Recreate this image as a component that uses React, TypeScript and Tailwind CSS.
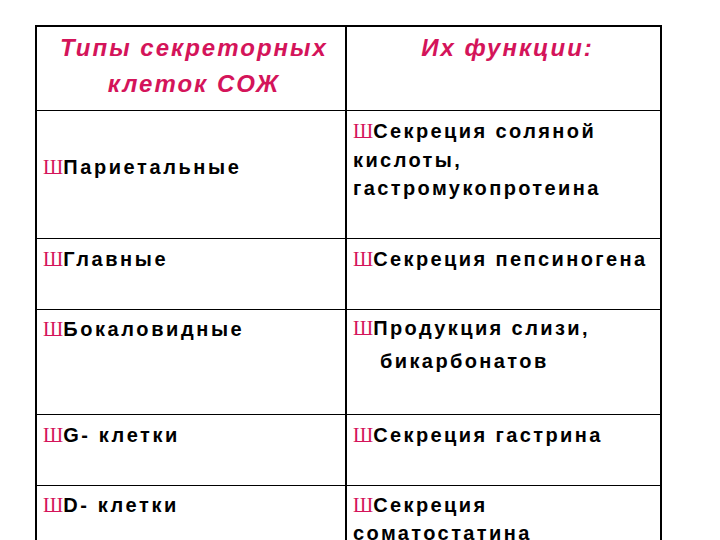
const rows = [
  { left: "Париетальные", right: ["Секреция соляной", "кислоты,", "гастромукопротеина"], h: "h-[128px]", lpt: "pt-[41px]", rlh: "leading-[28.5px]", rpt: "pt-[6px]" },
  { left: "Главные", right: ["Секреция пепсиногена"], h: "h-[71px]", lpt: "pt-[5px]", rlh: "leading-[30px]", rpt: "pt-[5px]" },
  { left: "Бокаловидные", right: ["Продукция слизи,", "бикарбонатов"], h: "h-[105px]", lpt: "pt-[4px]", rlh: "leading-[33px]", rpt: "pt-[2px]", indent: true },
  { left: "G- клетки", right: ["Секреция гастрина"], h: "h-[71px]", lpt: "pt-[5px]", rlh: "leading-[30px]", rpt: "pt-[5px]" },
  { left: "D- клетки", right: ["Секреция", "соматостатина"], h: "h-[80px]", lpt: "pt-[4px]", rlh: "leading-[28px]", rpt: "pt-[5px]" },
];

function Bullet() {
  return (
    <span className="font-['Liberation_Serif',serif] text-[20px] font-normal tracking-normal text-[#d4145a]">
      Ш
    </span>
  );
}

export default function App() {
  return (
    <div className="h-[540px] w-[720px] overflow-hidden bg-white pl-[35px] pt-[25px] font-['Liberation_Sans',Arial,sans-serif]">
      <div className="w-[627px] border-2 border-b-0 border-black">
        {/* Header */}
        <div className="grid h-[84px] grid-cols-[310px_1fr] border-b border-black">
          <div className="border-r-2 border-black pl-[6px] pt-[3px] text-center text-[24px] font-bold italic leading-[36px] tracking-[2px] text-[#d4145a]">
            Типы секреторных
            <br />
            клеток СОЖ
          </div>
          <div className="pt-[3px] pl-[8px] text-center text-[24px] font-bold italic leading-[36px] tracking-[2px] text-[#d4145a]">
            Их функции:
          </div>
        </div>

        {rows.map((r, i) => (
          <div
            key={i}
            className={`grid grid-cols-[310px_1fr] border-black ${r.h} ${i < rows.length - 1 ? "border-b" : ""}`}
          >
            <div className={`border-r-2 border-black pl-[6px] ${r.lpt} text-[20px] font-bold leading-[30px] tracking-[2.6px] text-black`}>
              <Bullet />
              {r.left}
            </div>
            <div className={`pl-[6px] ${r.rpt} text-[20px] font-bold ${r.rlh} tracking-[2.4px] text-black`}>
              {r.right.map((line, j) => (
                <div key={j} className={`whitespace-nowrap ${j > 0 && r.indent ? "pl-[27px]" : ""}`}>
                  {j === 0 && <Bullet />}
                  {line}
                </div>
              ))}
            </div>
          </div>
        ))}
      </div>
    </div>
  );
}
